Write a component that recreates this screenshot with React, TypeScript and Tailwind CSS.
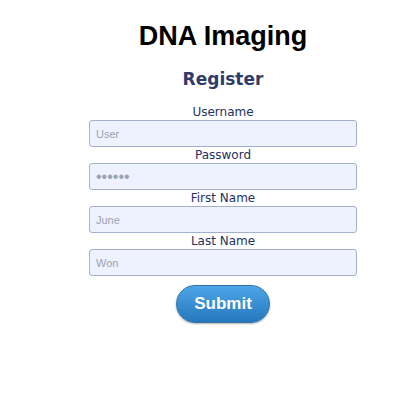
import React from 'react';

const fields = [
  { label: 'Username', placeholder: 'User', size: 'text-[11px]' },
  { label: 'Password', placeholder: '••••••', size: 'text-[16px]' },
  { label: 'First Name', placeholder: 'June', size: 'text-[11px]' },
  { label: 'Last Name', placeholder: 'Won', size: 'text-[11px]' },
];

export default function App() {
  return (
    <div className="w-[416px] h-[420px] bg-white">
      <div className="ml-[89px] w-[268px] flex flex-col items-center">
        <h1 className="mt-[20px] text-[27px] leading-[32px] font-bold text-black font-['Liberation_Sans',Arial,sans-serif]">
          DNA Imaging
        </h1>
        <h2 className="mt-[17px] text-[17px] leading-[20px] font-bold text-[#2f3b68] font-['DejaVu_Sans',sans-serif]">
          Register
        </h2>
        <form className="mt-[15px] w-full flex flex-col items-center">
          {fields.map((f) => (
            <div key={f.label} className="w-full flex flex-col items-center">
              <label className="h-[16px] text-[12px] leading-[17px] text-[#25315f] font-['DejaVu_Sans',sans-serif]">
                {f.label}
              </label>
              <input
                type="text"
                placeholder={f.placeholder}
                className={`w-full h-[27px] px-[6px] rounded-[3px] border border-[#a3b0d0] bg-[#edf2fe] ${f.size} font-['Liberation_Sans',Arial,sans-serif] placeholder:text-[#9aa3b6] outline-none`}
              />
            </div>
          ))}
          <button
            type="button"
            className="mt-[9px] w-[94px] h-[38px] rounded-full border border-[#3272a8] bg-gradient-to-b from-[#4ca6e8] to-[#2677bb] text-white text-[17px] font-bold font-['Liberation_Sans',Arial,sans-serif] shadow-[0_1px_2px_rgba(0,0,0,0.3)]"
          >
            Submit
          </button>
        </form>
      </div>
    </div>
  );
}
